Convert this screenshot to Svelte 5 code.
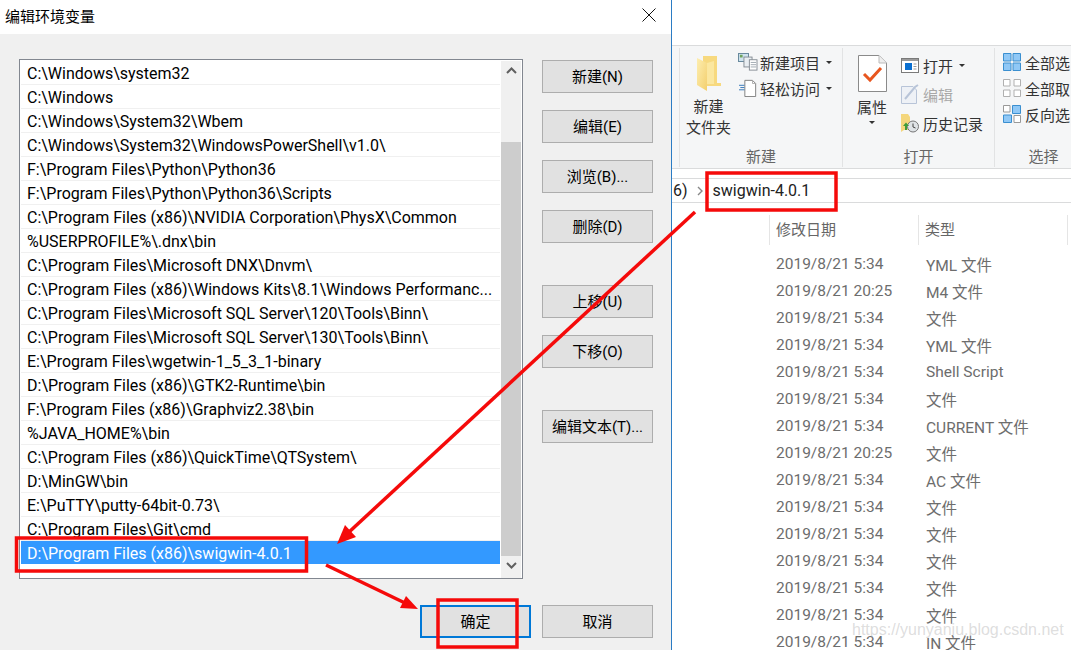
<script>
  const paths = [
    'C:\\Windows\\system32',
    'C:\\Windows',
    'C:\\Windows\\System32\\Wbem',
    'C:\\Windows\\System32\\WindowsPowerShell\\v1.0\\',
    'F:\\Program Files\\Python\\Python36',
    'F:\\Program Files\\Python\\Python36\\Scripts',
    'C:\\Program Files (x86)\\NVIDIA Corporation\\PhysX\\Common',
    '%USERPROFILE%\\.dnx\\bin',
    'C:\\Program Files\\Microsoft DNX\\Dnvm\\',
    'C:\\Program Files (x86)\\Windows Kits\\8.1\\Windows Performanc...',
    'C:\\Program Files\\Microsoft SQL Server\\120\\Tools\\Binn\\',
    'C:\\Program Files\\Microsoft SQL Server\\130\\Tools\\Binn\\',
    'E:\\Program Files\\wgetwin-1_5_3_1-binary',
    'D:\\Program Files (x86)\\GTK2-Runtime\\bin',
    'F:\\Program Files (x86)\\Graphviz2.38\\bin',
    '%JAVA_HOME%\\bin',
    'C:\\Program Files (x86)\\QuickTime\\QTSystem\\',
    'D:\\MinGW\\bin',
    'E:\\PuTTY\\putty-64bit-0.73\\',
    'C:\\Program Files\\Git\\cmd',
    'D:\\Program Files (x86)\\swigwin-4.0.1'
  ];

  const buttons = [
    { label: '新建(N)' },
    { label: '编辑(E)' },
    { label: '浏览(B)...' },
    { label: '删除(D)' },
    { label: '上移(U)', spaced: true },
    { label: '下移(O)' },
    { label: '编辑文本(T)...', spaced: true }
  ];

  const files = [
    ['2019/8/21 5:34', 'YML 文件'],
    ['2019/8/21 20:25', 'M4 文件'],
    ['2019/8/21 5:34', '文件'],
    ['2019/8/21 5:34', 'YML 文件'],
    ['2019/8/21 5:34', 'Shell Script'],
    ['2019/8/21 5:34', '文件'],
    ['2019/8/21 5:34', 'CURRENT 文件'],
    ['2019/8/21 20:25', '文件'],
    ['2019/8/21 5:34', 'AC 文件'],
    ['2019/8/21 5:34', '文件'],
    ['2019/8/21 5:34', '文件'],
    ['2019/8/21 5:34', '文件'],
    ['2019/8/21 5:34', '文件'],
    ['2019/8/21 5:34', '文件'],
    ['2019/8/21 5:34', 'IN 文件']
  ];
</script>

<div class="screen">
  <section class="dialog">
    <header class="title-bar">
      <span>编辑环境变量</span>
      <svg class="close" width="14" height="14" viewBox="0 0 14 14"><path d="M0.5 0.5 13.5 13.5M13.5 0.5 0.5 13.5" stroke="#111" fill="none" /></svg>
    </header>
    <div class="dialog-body">
      <div class="main-row">
        <div class="path-list">
          <ul class="rows">
            {#each paths as path, i}
              <li class:selected={i === paths.length - 1}><span>{path}</span></li>
            {/each}
          </ul>
          <div class="scrollbar">
            <svg class="arrow" width="11" height="7" viewBox="0 0 11 7"><path d="M1 6 5.5 1.5 10 6" stroke="#606060" stroke-width="2" fill="none" /></svg>
            <div class="thumb"></div>
            <svg class="arrow" width="11" height="7" viewBox="0 0 11 7"><path d="M1 1 5.5 5.5 10 1" stroke="#606060" stroke-width="2" fill="none" /></svg>
          </div>
        </div>
        <div class="side-buttons">
          {#each buttons as b}
            <button type="button" class="btn" class:spaced={b.spaced}>{b.label}</button>
          {/each}
        </div>
      </div>
      <div class="footer">
        <button type="button" class="btn focused">确定</button>
        <button type="button" class="btn">取消</button>
      </div>
    </div>
  </section>

  <section class="explorer">
    <div class="top-strip"></div>
    <div class="ribbon">
      <div class="group group-new">
        <div class="group-body">
          <div class="large large-folder">
            <svg class="folder-icon" width="24" height="35" viewBox="0 0 24 35">
              <defs>
                <linearGradient id="fold" x1="0" y1="0" x2="1" y2="1">
                  <stop offset="0" stop-color="#fdeeb0" />
                  <stop offset="1" stop-color="#f3cf6e" />
                </linearGradient>
              </defs>
              <path d="M6 0H20V27H24V30H6Z" fill="#f7d97f" />
              <path d="M0 2 10 7V35L0 29Z" fill="url(#fold)" />
              <path d="M10 7 17 5V28H10Z" fill="#fbe7a0" />
            </svg>
            <span class="large-label">新建<br />文件夹</span>
          </div>
          <div class="small-col">
            <div class="small">
              <svg width="20" height="18" viewBox="0 0 22 20">
                <rect x="0.5" y="0.5" width="11" height="9" fill="#cfe3ef" stroke="#5c7f95" />
                <rect x="6.5" y="4.5" width="9" height="11" fill="#e9eef2" stroke="#808890" />
                <rect x="12.5" y="7.5" width="8.5" height="11.5" fill="#fff" stroke="#808890" />
                <path d="M14 10.5h6M14 13h6M14 15.5h6" stroke="#9aa3aa" />
                <rect x="2" y="2" width="3" height="3" fill="#6ea35c" />
              </svg>
              <span>新建项目</span><i class="caret"></i>
            </div>
            <div class="small">
              <svg width="20" height="18" viewBox="0 0 22 20">
                <path d="M7.5 1.5H16L19.5 5V19.5H7.5Z" fill="#fff" stroke="#777" />
                <path d="M16 1.5V5H19.5" fill="none" stroke="#aaa" />
                <path d="M1 7H7M2.5 9.5H7M1 12H7" stroke="#2a6fb5" />
              </svg>
              <span>轻松访问</span><i class="caret"></i>
            </div>
          </div>
        </div>
        <div class="group-title">新建</div>
      </div>

      <div class="group group-open">
        <div class="group-body">
          <div class="large large-props">
            <svg width="29" height="37" viewBox="0 0 29 37">
              <path d="M0.5 0.5H21L28.5 8V36.5H0.5Z" fill="#fff" stroke="#8a8a8a" />
              <path d="M21 0.5V8H28.5" fill="#eee" stroke="#bbb" />
              <path d="M6 19 12 25 23 13" fill="none" stroke="#e8561f" stroke-width="3" />
            </svg>
            <span class="large-label">属性</span>
            <i class="caret"></i>
          </div>
          <div class="small-col tall">
            <div class="small">
              <svg width="18" height="15" viewBox="0 0 18 15">
                <rect x="0.5" y="0.5" width="17" height="14" fill="#fff" stroke="#7a7a7a" />
                <rect x="1" y="1" width="16" height="2" fill="#9a9a9a" />
                <rect x="4" y="5" width="7" height="7" fill="#0a6fd0" />
                <path d="M12.5 6h3M12.5 8.5h3M12.5 11h3" stroke="#999" />
              </svg>
              <span>打开</span><i class="caret"></i>
            </div>
            <div class="small muted">
              <svg width="18" height="20" viewBox="0 0 18 20">
                <path d="M0.5 2.5H12L15.5 6V19.5H0.5Z" fill="#eef1f6" stroke="#b8c4d8" />
                <path d="M4 15 14 3 17 1" fill="none" stroke="#b8c4d8" stroke-width="2" />
              </svg>
              <span>编辑</span>
            </div>
            <div class="small">
              <svg width="18" height="20" viewBox="0 0 18 20">
                <path d="M0 1H7L9 4V17H3L0 19Z" fill="#f4d67c" />
                <circle cx="12" cy="13.5" r="5.5" fill="#dfe3e6" stroke="#777" />
                <path d="M12 10.5V14L14.5 15" stroke="#444" fill="none" />
                <path d="M2 13 5 9.5 8 13H6V17H4V13Z" fill="#3f9b3a" />
              </svg>
              <span>历史记录</span>
            </div>
          </div>
        </div>
        <div class="group-title">打开</div>
      </div>

      <div class="group group-select">
        <div class="group-body">
          <div class="small-col">
            <div class="small">
              <svg width="18" height="18" viewBox="0 0 18 18">
                <path d="M0.5 0.5H8V8H0.5ZM10 0.5H17.5V8H10ZM0.5 10H8V17.5H0.5ZM10 10H17.5V17.5H10Z" fill="#90c8f6" stroke="#3a8fd0" />
              </svg>
              <span>全部选</span>
            </div>
            <div class="small">
              <svg width="18" height="18" viewBox="0 0 18 18">
                <path d="M0.5 0.5H7V7H0.5ZM11 0.5H17.5V7H11ZM0.5 11H7V17.5H0.5ZM11 11H17.5V17.5H11Z" fill="#fff" stroke="#b0b0b0" />
              </svg>
              <span>全部取</span>
            </div>
            <div class="small">
              <svg width="18" height="18" viewBox="0 0 18 18">
                <path d="M0.5 0.5H7V7H0.5ZM11 10.5H17.5V17.5H11Z" fill="#fff" stroke="#999" />
                <path d="M9.5 0.5H17.5V8.5H9.5ZM0.5 10H8.5V17.5H0.5Z" fill="#90c8f6" stroke="#3a8fd0" />
              </svg>
              <span>反向选</span>
            </div>
          </div>
        </div>
        <div class="group-title">选择</div>
      </div>
    </div>

    <div class="address">
      <span>6)</span>
      <svg class="crumb" width="6" height="10" viewBox="0 0 6 10"><path d="M1 1 5 5 1 9" stroke="#888" stroke-width="1.4" fill="none" /></svg>
      <span class="folder">swigwin-4.0.1</span>
    </div>

    <div class="columns">
      <div class="col-head date">修改日期</div>
      <div class="col-head type">类型</div>
    </div>

    <div class="files">
      {#each files as f}
        <div class="file-row"><span class="date-cell">{f[0]}</span><span>{f[1]}</span></div>
      {/each}
    </div>
  </section>

  <!-- annotations drawn on top of the screenshot -->
  <svg class="marks" width="1071" height="650" viewBox="0 0 1071 650">
    <g fill="none" stroke="#f50a0a" stroke-width="3.5">
      <rect x="707" y="173" width="129" height="37" />
      <rect x="16.5" y="538" width="290" height="33" />
      <rect x="438" y="600" width="79" height="47" />
      <path d="M695 212 348 533" />
      <path d="M326 565 405 603" />
    </g>
    <path d="M337 544 345 525 356 537Z" fill="#f50a0a" />
    <path d="M418 609 400 608 406 596Z" fill="#f50a0a" />
  </svg>
  <div class="watermark">https://yunyaniu.blog.csdn.net</div>
</div>

<style>
  :global(body) {
    margin: 0;
  }
  .screen {
    position: relative;
    display: flex;
    width: 1071px;
    height: 650px;
    overflow: hidden;
    background: #fff;
    font-family: Roboto, "Noto Sans CJK SC", sans-serif;
    font-size: 16px;
    color: #000;
  }
  .dialog {
    display: flex;
    flex-direction: column;
    width: 671px;
    flex: none;
    border-right: 1px solid #2b7cc4;
  }
  .title-bar {
    display: flex;
    align-items: center;
    justify-content: space-between;
    height: 34px;
    flex: none;
    padding: 0 15px 4px 5px;
    box-sizing: border-box;
    background: #fff;
    font-size: 15px;
  }
  .dialog-body {
    flex: 1;
    padding: 25px 18px 0 19px;
    background: #f0f0f0;
  }
  .main-row {
    display: flex;
    gap: 19px;
  }
  .path-list {
    display: flex;
    width: 504px;
    height: 520px;
    box-sizing: border-box;
    border: 1px solid #828790;
    padding: 1px 1px 0 1px;
    background: #fff;
  }
  .rows {
    flex: 1;
    list-style: none;
    margin: 0;
    padding: 0;
  }
  .rows li {
    display: flex;
    align-items: center;
    height: 24px;
    box-sizing: border-box;
    border-bottom: 1px solid #f0f0f0;
    padding: 2px 0 0 6px;
    white-space: nowrap;
  }
  .rows li.selected {
    background: #3399ff;
    color: #fff;
    border-bottom-color: #fff;
  }
  .scrollbar {
    display: flex;
    flex-direction: column;
    align-items: center;
    width: 20px;
    margin-left: 1px;
    background: #f0f0f0;
  }
  .arrow {
    flex: none;
    margin: 6px 0;
  }
  .thumb {
    width: 100%;
    height: 414px;
    flex: none;
    margin: 62px 0 0;
    background: #cdcdcd;
  }
  .side-buttons {
    display: flex;
    flex-direction: column;
    gap: 17px;
    padding-top: 1px;
  }
  .btn {
    width: 111px;
    height: 33px;
    box-sizing: border-box;
    border: 1px solid #adadad;
    border-radius: 0;
    background: #e1e1e1;
    padding: 0 0 3px;
    font: inherit;
    font-size: 15px;
    color: #000;
  }
  .btn.spaced {
    margin-top: 25px;
  }
  .btn.focused {
    border: 2px solid #0078d7;
  }
  .footer {
    display: flex;
    justify-content: flex-end;
    gap: 11px;
    margin-top: 26px;
  }
  .explorer {
    flex: 1;
    min-width: 0;
    overflow: hidden;
    display: flex;
    flex-direction: column;
  }
  .top-strip {
    height: 45px;
    flex: none;
    border-bottom: 1px solid #dadbdc;
  }
  .ribbon {
    display: flex;
    height: 123px;
    flex: none;
    box-sizing: border-box;
    padding: 2px 0 0 7px;
    background: #f5f6f7;
    border-bottom: 1px solid #dadbdc;
    overflow: hidden;
    font-size: 15px;
    color: #333;
  }
  .group {
    display: flex;
    flex-direction: column;
    flex: none;
    box-sizing: border-box;
    border-left: 1px solid #e2e3e4;
    height: 119px;
  }
  .group-new {
    width: 163px;
  }
  .group-open {
    width: 152px;
  }
  .group-select {
    width: 98px;
  }
  .group-body {
    display: flex;
    flex: 1;
  }
  .group-title {
    height: 20px;
    text-align: center;
    color: #666;
    line-height: 20px;
  }
  .large {
    display: flex;
    flex-direction: column;
    align-items: center;
    flex: none;
    width: 58px;
  }
  .large-folder {
    width: 57px;
    margin-right: 1px;
  }
  .large-folder .folder-icon {
    margin: 8px 0 6px;
  }
  .large-label {
    text-align: center;
    line-height: 21px;
  }
  .large-props svg {
    margin: 7px 0 0;
  }
  .large-props .large-label {
    margin-top: 6px;
  }
  .large-props .caret {
    margin: 2px 0 0;
  }
  .small-col {
    display: flex;
    flex-direction: column;
    gap: 6px;
    padding-top: 4px;
  }
  .small-col.tall {
    gap: 9px;
    padding-top: 7px;
  }
  .group-select .small-col {
    padding-left: 8px;
  }
  .small {
    display: flex;
    align-items: center;
    height: 20px;
    white-space: nowrap;
  }
  .small svg {
    flex: none;
    margin-right: 4px;
  }
  .group-new .small svg {
    margin-right: 2px;
  }
  .small.muted {
    color: #a8a8a8;
  }
  .caret {
    display: block;
    width: 0;
    height: 0;
    margin-left: 6px;
    border: 3px solid transparent;
    border-top: 3px solid #333;
    border-bottom: 0;
  }
  .address {
    display: flex;
    align-items: center;
    height: 25px;
    margin-top: 9px;
    flex: none;
    box-sizing: border-box;
    border-top: 1px solid #dadbdc;
    border-bottom: 1px solid #dadbdc;
    padding-left: 1px;
    font-size: 16px;
    color: #222;
  }
  .crumb {
    margin: 0 10px 0 9px;
  }
  .columns {
    display: flex;
    height: 30px;
    margin-top: 12px;
    flex: none;
    padding-left: 97px;
    color: #666;
    font-size: 15px;
  }
  .col-head {
    box-sizing: border-box;
    border-left: 1px solid #e5e5e5;
    padding-left: 6px;
    line-height: 30px;
  }
  .col-head.date {
    width: 149px;
  }
  .col-head.type {
    width: 150px;
    border-right: 1px solid #e5e5e5;
  }
  .files {
    padding: 5px 0 0 104px;
    color: #6d6d6d;
    font-size: 15.5px;
  }
  .file-row {
    display: flex;
    height: 27px;
    align-items: center;
    white-space: nowrap;
  }
  .date-cell {
    width: 150px;
    flex: none;
  }
  .marks {
    position: absolute;
    left: 0;
    top: 0;
    pointer-events: none;
  }
  .watermark {
    position: absolute;
    left: 852px;
    top: 621px;
    font-family: "Liberation Sans", sans-serif;
    font-size: 16px;
    color: rgba(170, 170, 170, 0.4);
    white-space: nowrap;
  }
</style>
